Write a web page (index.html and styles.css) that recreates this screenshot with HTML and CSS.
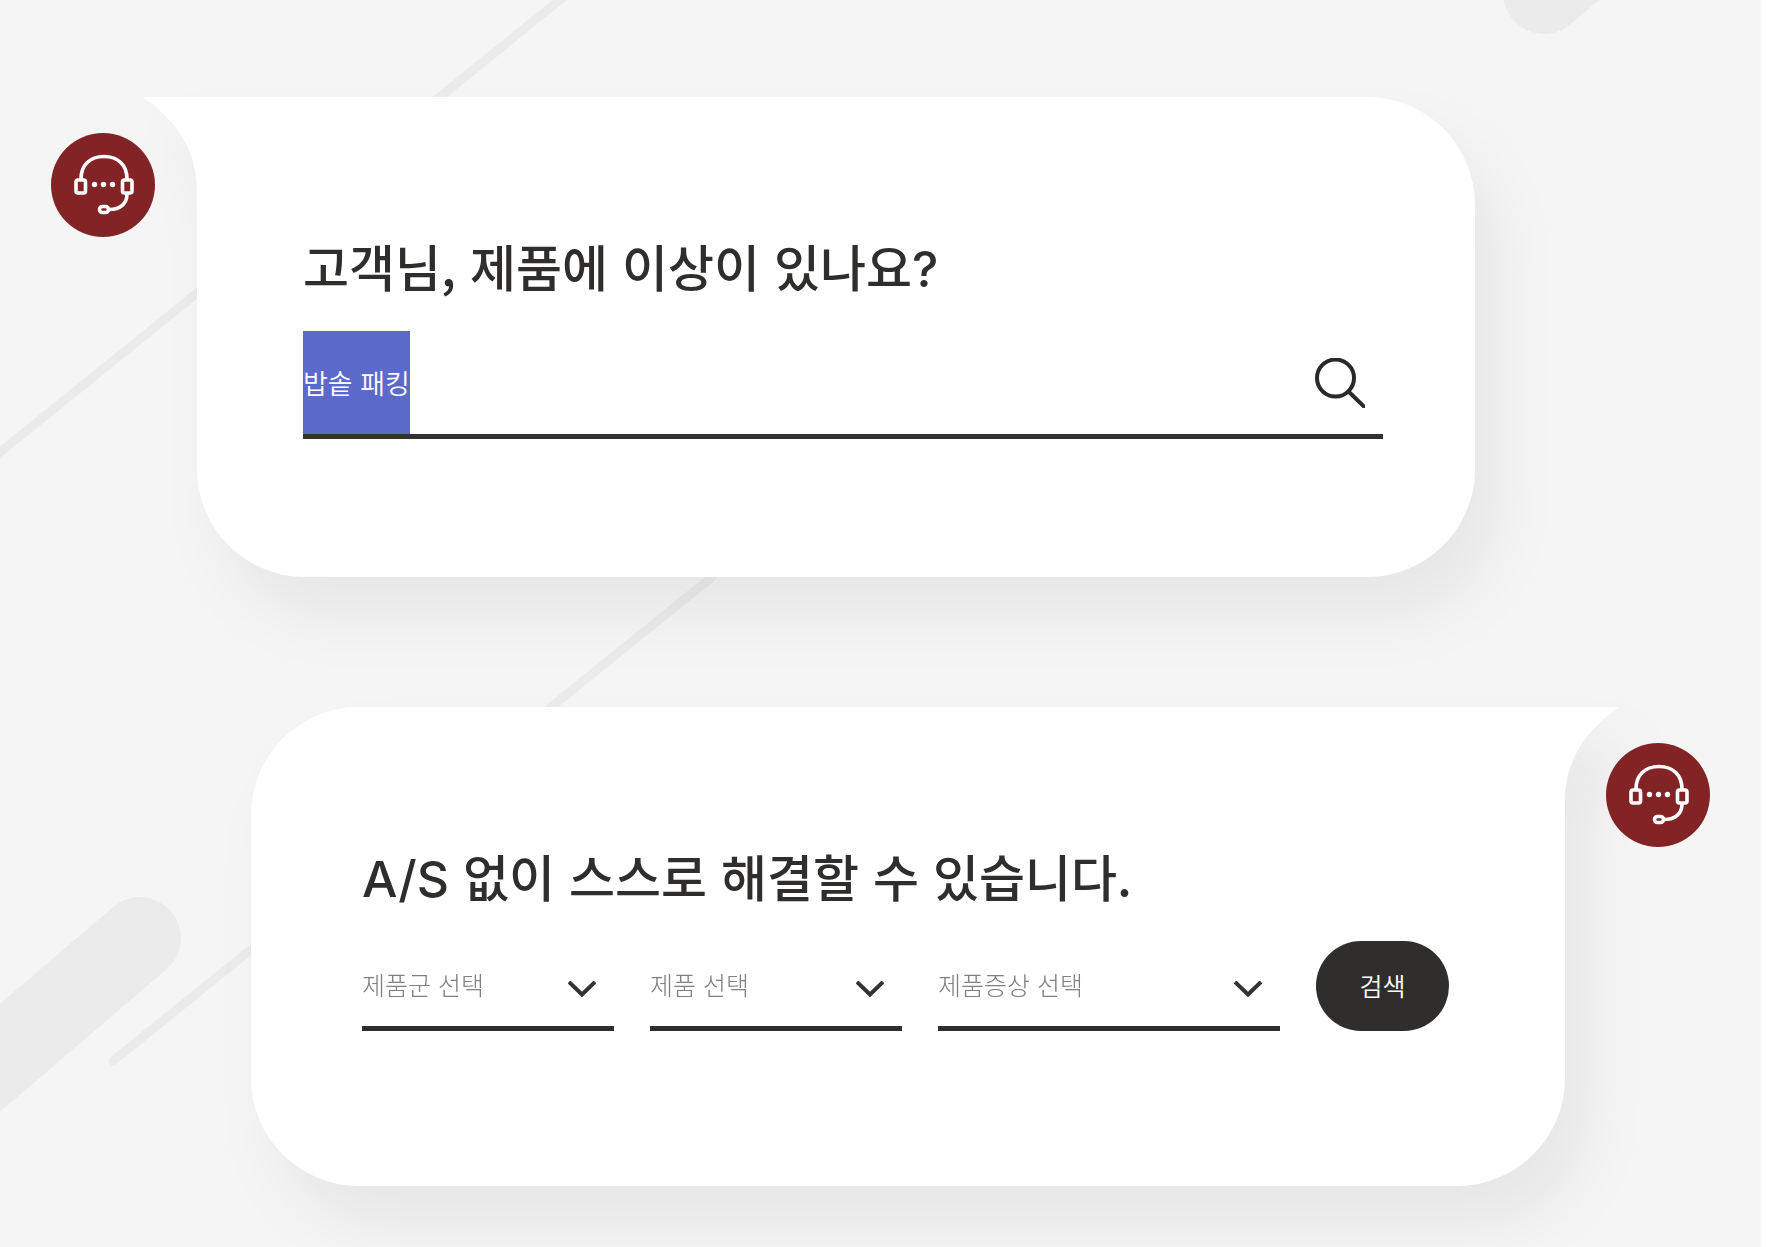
FILE: index.html
```html
<!DOCTYPE html>
<html lang="ko">
<head>
<meta charset="utf-8">
<meta name="viewport" content="width=device-width, initial-scale=1">
<title>고객 서비스</title>
<link rel="stylesheet" href="styles.css">
</head>
<body>
<main class="support">
  <svg class="stripes" aria-hidden="true" fill="none" stroke="#ebebeb" stroke-linecap="round">
    <path stroke-width="9" d="M572 -10L-12 462"/>
    <path stroke-width="9" d="M712 577L113 1061"/>
    <path stroke-width="82" d="M140 938L-60 1109M1544 -7L1700 -140"/>
  </svg>

  <section class="row row-first">
    <svg class="avatar" viewBox="0 0 104 104" aria-hidden="true">
      <circle cx="52" cy="52" r="52" fill="#822426"/>
      <g fill="none" stroke="#fff" stroke-width="3.6">
        <path d="M30 46C30 32 39 23.500 53 23.500S76 32 76 46"/>
        <rect x="25" y="47" width="9.500" height="13" rx="2"/>
        <rect x="71.500" y="47" width="9.500" height="13" rx="2"/>
        <path d="M76 61C76 70 70 76.500 58 76.500"/>
        <rect x="48.500" y="73.500" width="9" height="6" rx="3"/>
      </g>
      <g fill="#fff"><circle cx="43.500" cy="51.500" r="2.700"/><circle cx="52.500" cy="51.500" r="2.700"/><circle cx="61.500" cy="51.500" r="2.700"/></g>
    </svg>
    <div class="bubble bubble-left">
      <div class="shape" aria-hidden="true">
        <svg class="tail" viewBox="0 0 55 94"><path fill="#fff" d="M0 0H55V94H54C54 56 36 25 0 0Z"/></svg>
      </div>
      <h2 class="title"><label for="q">고객님, 제품에 이상이 있나요<span class="latin">?</span></label></h2>
      <form class="search">
        <input class="search-input" id="q" type="text" value="밥솥 패킹" autocomplete="off" spellcheck="false">
        <button class="search-button" type="button" aria-label="검색">
          <svg viewBox="0 0 50 50" width="50" height="50" fill="none" stroke="#2a2928" stroke-width="4"><circle cx="20.500" cy="20" r="18.500"/><path d="M33 33L50 49.500"/></svg>
        </button>
      </form>
    </div>
  </section>

  <section class="row row-second">
    <div class="bubble bubble-right">
      <div class="shape" aria-hidden="true">
        <svg class="tail" viewBox="0 0 55 94"><path fill="#fff" d="M55 0H0V94H1C1 56 19 25 55 0Z"/></svg>
      </div>
      <h2 class="title"><span class="latin">A/S</span> 없이 스스로 해결할 수 있습니다.</h2>
      <form class="filters">
        <select class="picker" aria-label="제품군 선택"><option>제품군 선택</option></select>
        <select class="picker" aria-label="제품 선택"><option>제품 선택</option></select>
        <select class="picker picker-wide" aria-label="제품증상 선택"><option>제품증상 선택</option></select>
        <button class="submit" type="button">검색</button>
      </form>
    </div>
    <svg class="avatar" viewBox="0 0 104 104" aria-hidden="true">
      <circle cx="52" cy="52" r="52" fill="#822426"/>
      <g fill="none" stroke="#fff" stroke-width="3.6">
        <path d="M30 46C30 32 39 23.500 53 23.500S76 32 76 46"/>
        <rect x="25" y="47" width="9.500" height="13" rx="2"/>
        <rect x="71.500" y="47" width="9.500" height="13" rx="2"/>
        <path d="M76 61C76 70 70 76.500 58 76.500"/>
        <rect x="48.500" y="73.500" width="9" height="6" rx="3"/>
      </g>
      <g fill="#fff"><circle cx="43.500" cy="51.500" r="2.700"/><circle cx="52.500" cy="51.500" r="2.700"/><circle cx="61.500" cy="51.500" r="2.700"/></g>
    </svg>
  </section>
</main>
<script src="main.js"></script>
</body>
</html>
```
FILE: styles.css
```css
* {
  box-sizing: border-box;
}

body {
  margin: 0;
  background: #fff;
  color: #2f2e2d;
  font-family: "Noto Sans CJK KR", sans-serif;
}

.support {
  position: relative;
  display: flex;
  flex-direction: column;
  gap: 130px;
  min-height: 100vh;
  margin-right: 5px;
  padding: 97px 0 60px;
  background: #f5f5f5;
  overflow: hidden;
}

.stripes {
  position: absolute;
  inset: 0;
  width: 100%;
  height: 100%;
}

.row {
  position: relative;
  z-index: 0;
  display: flex;
  align-items: flex-start;
}

.row-first {
  gap: 42px;
  padding: 0 286px 0 51px;
}

.row-second {
  gap: 41px;
  padding: 0 51px 0 251px;
}

.avatar {
  position: relative;
  z-index: 1;
  flex: none;
  width: 104px;
  height: 104px;
  margin-top: 36px;
}

.bubble {
  position: relative;
  flex: 1;
  min-width: 0;
}

.bubble-left {
  padding: 128px 92px 138px 106px;
}

.bubble-right {
  padding: 128px 116px 155px 111px;
}

.shape {
  position: absolute;
  inset: 0;
  z-index: -1;
  background: #fff;
  filter: drop-shadow(24px 40px 30px rgba(0, 0, 0, 0.055));
}

.bubble-left .shape {
  border-radius: 0 108px 108px 108px;
}

.bubble-right .shape {
  border-radius: 108px 0 108px 108px;
}

.tail {
  position: absolute;
  top: 0;
  width: 55px;
  height: 94px;
}

.bubble-left .tail {
  right: 100%;
  margin-right: -1px;
}

.bubble-right .tail {
  left: 100%;
  margin-left: -1px;
}

.title {
  margin: 0;
  font-size: 50px;
  line-height: 80px;
  font-weight: 500;
}

.latin {
  font-family: Inter, sans-serif;
  line-height: 1;
}

.search {
  display: flex;
  align-items: center;
  margin-top: 26px;
  padding-right: 18px;
  border-bottom: 5px solid #32312c;
}

.search-input {
  flex: 1;
  min-width: 0;
  height: 103px;
  padding: 0;
  border: 0;
  outline: 0;
  background: none;
  color: inherit;
  font: 350 27px/103px "Noto Sans CJK KR", sans-serif;
}

.search-input::selection {
  background: #5b69ca;
  color: #fff;
}

.search-button {
  width: 50px;
  height: 50px;
  padding: 0;
  border: 0;
  background: none;
}

.search-button svg {
  display: block;
}

.filters {
  display: flex;
  gap: 36px;
  margin-top: 26px;
}

.picker {
  flex: 252 1 252px;
  min-width: 0;
  height: 90px;
  padding: 0 50px 0 0;
  border: 0;
  border-bottom: 5px solid #2f2e2d;
  border-radius: 0;
  appearance: none;
  color: #808080;
  font: 300 25px/38px "Noto Sans CJK KR", sans-serif;
  background: url("data:image/svg+xml,%3Csvg xmlns='http://www.w3.org/2000/svg' width='28' height='16' fill='none' stroke='%23333' stroke-width='4'%3E%3Cpath d='M1 1l13 12.500L27 1'/%3E%3C/svg%3E") no-repeat right 18px top 40px;
}

.picker-wide {
  flex: 342 1 342px;
}

.submit {
  flex: none;
  width: 133px;
  height: 90px;
  padding: 0 0 3px;
  border: 0;
  border-radius: 45px;
  background: #2f2e2d;
  color: #fff;
  font: 350 25px/38px "Noto Sans CJK KR", sans-serif;
}
```
FILE: main.js
```js
// The query starts selected so that typing replaces it.
const query = document.getElementById("q");
query.focus();
query.select();
```
